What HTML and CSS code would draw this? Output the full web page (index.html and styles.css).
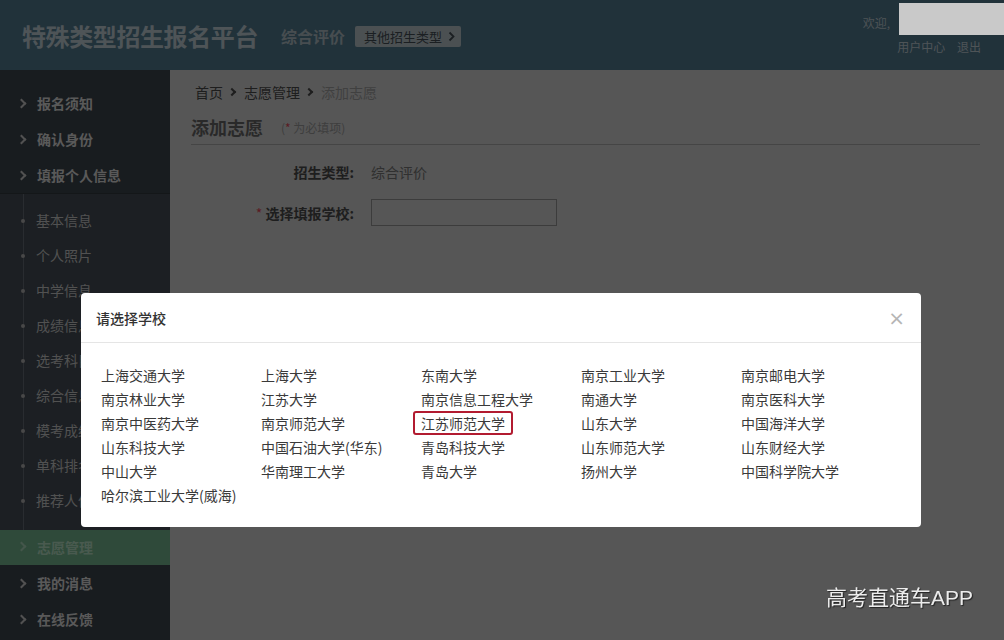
FILE: index.html
```html
<!DOCTYPE html>
<html lang="zh-CN">
<head>
  <meta charset="UTF-8" />
  <meta name="viewport" content="width=device-width, initial-scale=1.0" />
  <title>特殊类型招生报名平台</title>
  <link rel="stylesheet" href="styles.css">
</head>
<body>
  <header class="topbar">
    <div class="brand">
      <h1 class="brand-title">特殊类型招生报名平台</h1>
      <span class="brand-type">综合评价</span>
      <a class="type-switch" href="#">其他招生类型
        <svg width="7" height="11" viewBox="0 0 7 11"><polyline points="1.5,1.5 5.5,5.5 1.5,9.5" fill="none" stroke="currentColor" stroke-width="1.8"/></svg>
      </a>
    </div>
    <div class="user">
      <div class="user-row">
        <span class="welcome">欢迎,</span>
        <span class="user-name"></span>
      </div>
      <div class="user-links">
        <a href="#">用户中心</a>
        <a href="#">退出</a>
      </div>
    </div>
  </header>

  <div class="layout">
    <aside class="sidebar">
      <ul class="menu">
        <li class="menu-item"><a href="#"><i class="chev"></i>报名须知</a></li>
        <li class="menu-item"><a href="#"><i class="chev"></i>确认身份</a></li>
        <li class="menu-item"><a href="#"><i class="chev"></i>填报个人信息</a></li>
        <li>
          <ul class="submenu">
            <li><a href="#">基本信息</a></li>
            <li><a href="#">个人照片</a></li>
            <li><a href="#">中学信息</a></li>
            <li><a href="#">成绩信息</a></li>
            <li><a href="#">选考科目</a></li>
            <li><a href="#">综合信息</a></li>
            <li><a href="#">模考成绩</a></li>
            <li><a href="#">单科排名</a></li>
            <li><a href="#">推荐人信息</a></li>
          </ul>
        </li>
        <li class="menu-item active"><a href="#"><i class="chev"></i>志愿管理</a></li>
        <li class="menu-item"><a href="#"><i class="chev"></i>我的消息</a></li>
        <li class="menu-item"><a href="#"><i class="chev"></i>在线反馈</a></li>
      </ul>
    </aside>

    <main class="content">
      <div class="crumbs">
        <a href="#">首页</a><i class="crumb-sep"></i><a href="#">志愿管理</a><i class="crumb-sep"></i><span>添加志愿</span>
      </div>
      <div class="page-head">
        <h2>添加志愿</h2>
        <span class="hint">(<b>*</b> 为必填项)</span>
      </div>
      <form class="form">
        <label class="form-label">招生类型:</label>
        <div class="form-value">综合评价</div>
        <label class="form-label"><b>*</b> 选择填报学校:</label>
        <div class="form-value"><input type="text" class="school-input" /></div>
      </form>
    </main>
  </div>

  <div class="mask">
    <div class="dialog">
      <div class="dialog-head">
        <h3>请选择学校</h3>
        <span class="dialog-close">×</span>
      </div>
      <ul class="school-list">
        <li>上海交通大学</li>
        <li>上海大学</li>
        <li>东南大学</li>
        <li>南京工业大学</li>
        <li>南京邮电大学</li>
        <li>南京林业大学</li>
        <li>江苏大学</li>
        <li>南京信息工程大学</li>
        <li>南通大学</li>
        <li>南京医科大学</li>
        <li>南京中医药大学</li>
        <li>南京师范大学</li>
        <li class="picked"><span>江苏师范大学</span></li>
        <li>山东大学</li>
        <li>中国海洋大学</li>
        <li>山东科技大学</li>
        <li>中国石油大学(华东)</li>
        <li>青岛科技大学</li>
        <li>山东师范大学</li>
        <li>山东财经大学</li>
        <li>中山大学</li>
        <li>华南理工大学</li>
        <li>青岛大学</li>
        <li>扬州大学</li>
        <li>中国科学院大学</li>
        <li>哈尔滨工业大学(威海)</li>
      </ul>
    </div>
  </div>

  <div class="watermark">高考直通车APP</div>
</body>
</html>
```

FILE: styles.css
```css
* {
  box-sizing: border-box;
}
body {
  font-family: "Noto Sans CJK SC", "Liberation Sans", sans-serif;
  margin: 0;
  padding: 0;
  height: 640px;
  overflow: hidden;
  background: #bebebe;
  color: #444;
}
a {
  color: inherit;
  text-decoration: none;
}
ul {
  list-style: none;
  margin: 0;
  padding: 0;
}

/* top bar */
.topbar {
  height: 70px;
  background-color: #4b6f81;
  display: flex;
  justify-content: space-between;
  padding: 0 23px 0 22px;
}
.brand {
  display: flex;
  align-items: center;
  padding-top: 2px;
}
.brand-title {
  margin: 0;
  font-size: 24px;
  line-height: 30px;
  letter-spacing: -0.4px;
  color: #adbbc2;
}
.brand-type {
  margin-left: 23px;
  font-size: 16px;
  font-weight: bold;
  color: #9dabb2;
}
.type-switch {
  display: flex;
  align-items: center;
  gap: 6px;
  margin-left: 10px;
  height: 21px;
  padding: 0 6px 0 9px;
  background: #a7b2b6;
  border-radius: 2px;
  font-size: 13px;
  color: #3c464d;
}
.user {
  display: flex;
  flex-direction: column;
  align-items: flex-end;
  padding-top: 3px;
}
.user-row {
  display: flex;
  margin-right: -23px;
}
.welcome {
  margin-top: 11px;
  margin-right: 9px;
  font-size: 12px;
  line-height: 18px;
  color: #a9b6bd;
}
.user-name {
  position: relative;
  z-index: 2;
  width: 105px;
  height: 32px;
  background: #c9c9c9;
}
.user-links {
  margin-top: 3px;
  font-size: 12px;
  line-height: 18px;
  color: #adbac1;
}
.user-links a {
  margin-left: 9px;
}

.layout {
  display: flex;
  height: 570px;
}

/* left menu */
.sidebar {
  width: 170px;
  flex-shrink: 0;
  background: #373e45;
  padding-top: 15px;
}
.menu-item a {
  display: flex;
  align-items: center;
  height: 36px;
  padding-left: 20px;
  font-size: 14px;
  font-weight: bold;
  color: #c6c6c6;
}
.chev {
  width: 7px;
  height: 7px;
  margin: 0 12px 0 -2px;
  border-top: 2px solid #b4b4b4;
  border-right: 2px solid #b4b4b4;
  transform: rotate(45deg);
}
.menu-item.active a {
  height: 35px;
  padding-bottom: 2px;
  background: #68a481;
  color: #a3c8b0;
}
.menu-item.active .chev {
  border-color: #98bfa6;
}
.submenu {
  position: relative;
  background: #3f464e;
  border-top: 1px solid #2d3338;
  padding: 9px 0 12px;
}
.submenu::before {
  content: "";
  position: absolute;
  left: 23px;
  top: 0;
  bottom: 0;
  width: 1px;
  background: #5b636b;
}
.submenu li a {
  position: relative;
  display: block;
  height: 35px;
  line-height: 35px;
  padding-left: 36px;
  font-size: 14px;
  color: #b4b4b4;
}
.submenu li a::before {
  content: "";
  position: absolute;
  left: 21px;
  top: 16px;
  width: 4px;
  height: 4px;
  border-radius: 50%;
  background: #a0a0a0;
}

/* main panel */
.content {
  flex: 1;
  padding: 12px 0 0 21px;
  margin-right: 24px;
}
.crumbs {
  display: flex;
  align-items: center;
  padding-left: 4px;
  font-size: 14px;
  line-height: 20px;
  color: #434343;
}
.crumbs span {
  color: #8f8f8f;
}
.crumb-sep {
  width: 6px;
  height: 6px;
  margin: 0 9px 0 6px;
  border-top: 2px solid #434343;
  border-right: 2px solid #434343;
  transform: rotate(45deg);
}
.page-head {
  display: flex;
  align-items: center;
  margin-top: 12px;
  padding-bottom: 4px;
  border-bottom: 1px solid #999;
}
.page-head h2 {
  margin: 0;
  font-size: 18px;
  line-height: 26px;
  color: #5c5c5c;
}
.hint {
  margin-left: 18px;
  font-size: 12px;
  color: #8a8a8a;
}
.hint b,
.form-label b {
  color: #c8404f;
  font-weight: normal;
}
.form {
  display: grid;
  grid-template-columns: 163px 1fr;
  column-gap: 17px;
  row-gap: 15px;
  align-items: center;
  margin-top: 15px;
}
.form-label {
  text-align: right;
  font-size: 14px;
  font-weight: bold;
  line-height: 24px;
  color: #444;
}
.form-value {
  font-size: 14px;
  line-height: 24px;
  color: #6a6a6a;
}
.school-input {
  display: block;
  width: 186px;
  height: 27px;
  border: 1px solid #858585;
  background: transparent;
}

/* school picker dialog */
.mask {
  position: fixed;
  inset: 0;
  background: rgba(0, 0, 0, 0.55);
  display: flex;
  justify-content: center;
  padding-top: 293px;
  padding-right: 2px;
}
.dialog {
  width: 840px;
  height: 234px;
  background: #fff;
  border-radius: 4px;
}
.dialog-head {
  display: flex;
  justify-content: space-between;
  align-items: center;
  height: 50px;
  padding: 0 16px 0 15px;
  border-bottom: 1px solid #e5e5e5;
}
.dialog-head h3 {
  margin: 0;
  font-size: 14px;
  font-weight: 500;
  color: #333;
}
.dialog-close {
  font-size: 20px;
  color: #b5b5b5;
  font-family: "DejaVu Sans", sans-serif;
}
.school-list {
  display: grid;
  grid-template-columns: repeat(5, 160px);
  padding: 20px 20px;
}
.school-list li {
  font-size: 14px;
  line-height: 24px;
  color: #3a3a3a;
  white-space: nowrap;
}
.school-list .picked span {
  margin-left: -8px;
  padding: 0 6px;
  border: 2px solid #b21b30;
  border-radius: 3px;
}

.watermark {
  position: fixed;
  right: 31px;
  bottom: 30px;
  font-family: "Liberation Sans", "Noto Sans CJK SC", sans-serif;
  font-size: 21px;
  line-height: 24px;
  color: #ececec;
  text-shadow: 1px 1px 1px #222;
}
```
